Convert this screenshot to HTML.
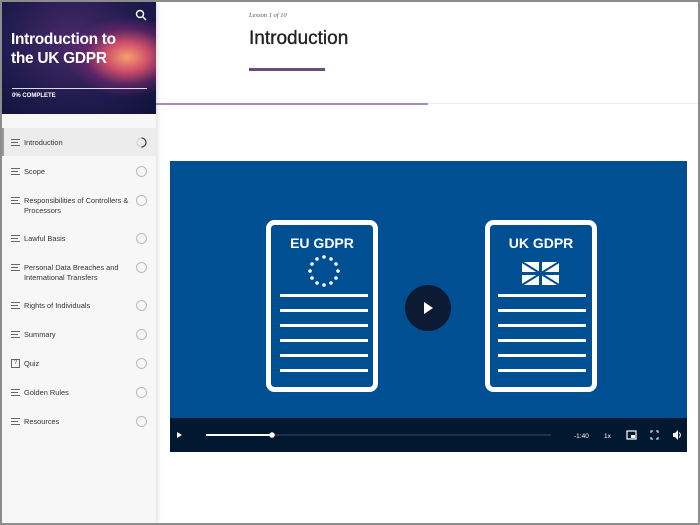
<!DOCTYPE html>
<html><head><style>
*{margin:0;padding:0;box-sizing:border-box}
body{width:700px;height:525px;background:#8c8c8c;font-family:"Liberation Sans",sans-serif;overflow:hidden;position:relative}
#wrap{position:absolute;left:2px;top:2px;width:696px;height:521px;background:#fff;overflow:hidden}
#side{position:absolute;left:0;top:0;width:154px;height:521px;background:#f7f7f7;box-shadow:2px 0 4px rgba(0,0,0,.12)}
#hero{position:absolute;left:0;top:0;width:154px;height:112px;background:radial-gradient(ellipse 60px 40px at 125px 55px,#f7a070 0,#d0506a 35%,rgba(120,40,110,.6) 70%,rgba(0,0,0,0) 100%),radial-gradient(ellipse at 70px 40px,#4a2a6a 0,#221c50 55%,#10123a 100%)}
#hero h1{position:absolute;left:9px;top:28px;color:#fff;font-size:15.5px;line-height:19px;font-weight:bold;letter-spacing:-.3px}
#hero .bar{position:absolute;left:10px;top:86px;width:135px;height:1px;background:#ddd}
#hero .pc{position:absolute;left:10px;top:91px;color:#fff;font-size:6px;font-weight:bold}
.item{position:absolute;left:0;width:154px;font-size:7.4px;color:#333;line-height:9.5px}
.item .t{position:absolute;left:22px;width:110px}
.item .ic{position:absolute;left:9px;top:1px;width:9px;height:7px;border-top:1px solid #666;border-bottom:1px solid #666}
.item .ic:after{content:"";position:absolute;left:0;top:2px;width:7px;height:1px;background:#666}
.item .q{position:absolute;left:9px;top:0;width:9px;height:9px;border:1px solid #666;font-size:6px;text-align:center;line-height:7px;color:#444}
.item .c{position:absolute;left:134px;top:-1px;width:11px;height:11px;border:1px solid #bbb;border-radius:50%}
#main{position:absolute;left:154px;top:0;width:542px;height:521px}
</style></head><body><div id="wrap">
<div id="side">
<div id="hero"><h1>Introduction to<br>the UK GDPR</h1>
<svg style="position:absolute;left:133px;top:7px" width="12" height="12"><circle cx="5" cy="5" r="3.5" fill="none" stroke="#fff" stroke-width="1.4"/><line x1="7.5" y1="7.5" x2="11" y2="11" stroke="#fff" stroke-width="1.4"/></svg>
<div class="bar"></div><div class="pc">0% COMPLETE</div></div>
<div style="position:absolute;left:0;top:126px;width:154px;height:28px;background:#ececec;border-left:2px solid #999"></div>
<div class="item" style="top:136px"><span class="ic"></span><span class="t">Introduction</span><svg class="c" style="border:none" width="11" height="11"><circle cx="5.5" cy="5.5" r="4.5" fill="none" stroke="#ccc" stroke-width="1"/><path d="M5.5 1 A4.5 4.5 0 0 1 5.5 10" fill="none" stroke="#444" stroke-width="1.3"/></svg></div>
<div class="item" style="top:165px"><span class="ic"></span><span class="t">Scope</span><span class="c"></span></div>
<div class="item" style="top:194px"><span class="ic"></span><span class="t">Responsibilities of Controllers &amp; Processors</span><span class="c"></span></div>
<div class="item" style="top:232px"><span class="ic"></span><span class="t">Lawful Basis</span><span class="c"></span></div>
<div class="item" style="top:261px"><span class="ic"></span><span class="t">Personal Data Breaches and International Transfers</span><span class="c"></span></div>
<div class="item" style="top:299px"><span class="ic"></span><span class="t">Rights of Individuals</span><span class="c"></span></div>
<div class="item" style="top:328px"><span class="ic"></span><span class="t">Summary</span><span class="c"></span></div>
<div class="item" style="top:357px"><span class="q">?</span><span class="t">Quiz</span><span class="c"></span></div>
<div class="item" style="top:386px"><span class="ic"></span><span class="t">Golden Rules</span><span class="c"></span></div>
<div class="item" style="top:415px"><span class="ic"></span><span class="t">Resources</span><span class="c"></span></div>
</div>
<div id="main">
<div style="position:absolute;left:93px;top:10px;font-family:'Liberation Serif',serif;font-style:italic;font-size:6.5px;color:#555">Lesson 1 of 10</div>
<div style="position:absolute;left:93px;top:26px;font-size:19px;color:#222;-webkit-text-stroke:0.35px #222">Introduction</div>
<div style="position:absolute;left:93px;top:66px;width:76px;height:3px;background:#6a4a80"></div>
<div style="position:absolute;left:0;top:101px;width:272px;height:2px;background:#a48cb4"></div>
<div style="position:absolute;left:272px;top:101px;width:270px;height:1px;background:#eee"></div>
<svg style="position:absolute;left:14px;top:159px" width="517" height="291">
<rect width="517" height="291" fill="#014f93"/>
<g fill="none" stroke="#fff" stroke-width="5"><rect x="98.5" y="61.5" width="107" height="167" rx="6"/><rect x="317.5" y="61.5" width="107" height="167" rx="6"/></g>
<g font-family="Liberation Sans" font-weight="bold" font-size="14" fill="#fff" text-anchor="middle"><text x="152" y="87">EU GDPR</text><text x="371" y="87">UK GDPR</text></g>
<g fill="#fff" transform="translate(0,-13)">
<circle cx="154" cy="109" r="1.8"/><circle cx="161" cy="111" r="1.8"/><circle cx="166" cy="116" r="1.8"/><circle cx="168" cy="123" r="1.8"/><circle cx="166" cy="130" r="1.8"/><circle cx="161" cy="135" r="1.8"/><circle cx="154" cy="137" r="1.8"/><circle cx="147" cy="135" r="1.8"/><circle cx="142" cy="130" r="1.8"/><circle cx="140" cy="123" r="1.8"/><circle cx="142" cy="116" r="1.8"/><circle cx="147" cy="111" r="1.8"/></g>
<g fill="#fff">
<rect x="110" y="133" width="88" height="3"/><rect x="110" y="148" width="88" height="3"/><rect x="110" y="163" width="88" height="3"/><rect x="110" y="178" width="88" height="3"/><rect x="110" y="193" width="88" height="3"/><rect x="110" y="208" width="88" height="3"/>
<rect x="328" y="133" width="88" height="3"/><rect x="328" y="148" width="88" height="3"/><rect x="328" y="163" width="88" height="3"/><rect x="328" y="178" width="88" height="3"/><rect x="328" y="193" width="88" height="3"/><rect x="328" y="208" width="88" height="3"/>
<rect x="352" y="101" width="37" height="23"/></g>
<g stroke="#014f93"><line x1="352" y1="101" x2="389" y2="124" stroke-width="2"/><line x1="389" y1="101" x2="352" y2="124" stroke-width="2"/><line x1="370.5" y1="101" x2="370.5" y2="124" stroke-width="3"/><line x1="352" y1="112.5" x2="389" y2="112.5" stroke-width="3"/></g>
<circle cx="258" cy="147" r="23" fill="#0c1a33"/><path d="M254 141 L263 147 L254 153Z" fill="#fff"/>
<rect y="257" width="517" height="34" fill="#021831"/>
<path d="M7 271 L12 274 L7 277Z" fill="#fff"/>
<rect x="36" y="273.5" width="345" height="1" fill="#3a4d66"/><rect x="36" y="273" width="66" height="2" fill="#fff"/><circle cx="102" cy="274" r="2.8" fill="#fff"/>
<g font-family="Liberation Sans" font-size="6.5" fill="#fff"><text x="404" y="277">-1:40</text><text x="434" y="277">1x</text></g>
<rect x="457" y="270" width="9" height="8" fill="none" stroke="#fff" stroke-width="1.2"/><rect x="461" y="274" width="4" height="3" fill="#fff"/>
<path d="M481 272v-2h2M486 270h2v2M488 276v2h-2M483 278h-2v-2" fill="none" stroke="#fff" stroke-width="1"/>
<path d="M503 272h2l3-3v10l-3-3h-2z" fill="#fff"/><path d="M509 271.5a3 3 0 0 1 0 5" stroke="#fff" fill="none"/>
</svg>
</div>
</div></body></html>
